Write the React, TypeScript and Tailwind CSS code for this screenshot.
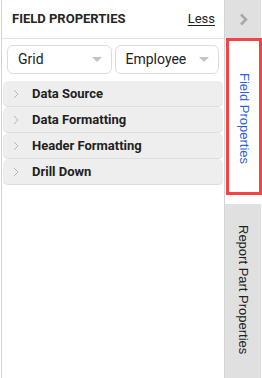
const sections = ["Data Source", "Data Formatting", "Header Formatting", "Drill Down"];

function Caret() {
  return (
    <svg width="10" height="6" viewBox="0 0 10 6" className="shrink-0">
      <path d="M0 0 L10 0 L5 5 Z" fill="#c4c4c4" />
    </svg>
  );
}

function Dropdown({ label }: { label: string }) {
  return (
    <div className="flex h-[29px] flex-1 items-center justify-between rounded-[6px] border border-[#dcdcdc] bg-white pl-[10px] pr-[9px]">
      <span className="text-[14px] text-[#222]">{label}</span>
      <Caret />
    </div>
  );
}

export default function App() {
  return (
    <div
      className="flex h-[378px] w-[262px] bg-white"
      style={{ fontFamily: "Roboto, 'Liberation Sans', sans-serif" }}
    >
      {/* field properties panel */}
      <div className="ml-px flex w-[224px] flex-col border-l border-r border-[#d4d4d4]">
        <div className="flex h-[39px] items-center justify-between border-b border-[#e2e2e2] pl-[10px] pr-[9px]">
          <span className="text-[13px] font-bold text-[#262626]">FIELD PROPERTIES</span>
          <span className="text-[13px] text-[#222] underline underline-offset-2">Less</span>
        </div>
        <div className="flex gap-[3px] px-[5px] pt-[6px]">
          <Dropdown label="Grid" />
          <Dropdown label="Employee" />
        </div>
        <div className="flex flex-col px-px pt-[7px]">
          {sections.map((s) => (
            <div
              key={s}
              className="flex h-[26px] items-center rounded-[5px] border-b border-[#dedede] bg-[#eeeeee] pl-[10px]"
            >
              <svg width="6" height="10" viewBox="0 0 6 10" className="shrink-0">
                <path d="M1 1 L5 5 L1 9" fill="none" stroke="#b8b8b8" strokeWidth="1" />
              </svg>
              <span className="ml-[13px] text-[13px] font-bold text-[#222]">{s}</span>
            </div>
          ))}
        </div>
      </div>

      {/* tabs column */}
      <div className="flex w-[36px] flex-col bg-[#e0e0e0]">
        <div className="flex h-[38px] items-center justify-center">
          <svg width="9" height="13" viewBox="0 0 9 13">
            <path d="M2 1.5 L7 6.5 L2 11.5" fill="none" stroke="#a8a8a8" strokeWidth="2.5" />
          </svg>
        </div>
        <div className="flex h-[166px] flex-col bg-white">
          <div
            className="ml-px flex h-[157px] w-[36px] items-start justify-center border-[3px] border-[#f24444] pt-[32px]"
            style={{ fontFamily: "'Liberation Sans', Arial, sans-serif" }}
          >
            <span className="text-[13px] text-[#2f5fe0] [writing-mode:vertical-rl]">Field Properties</span>
          </div>
        </div>
        <div
          className="flex flex-1 justify-center pt-[21px]"
          style={{ fontFamily: "'Liberation Sans', Arial, sans-serif" }}
        >
          <span className="text-[13px] text-[#222] [writing-mode:vertical-rl]">Report Part Properties</span>
        </div>
      </div>
    </div>
  );
}
